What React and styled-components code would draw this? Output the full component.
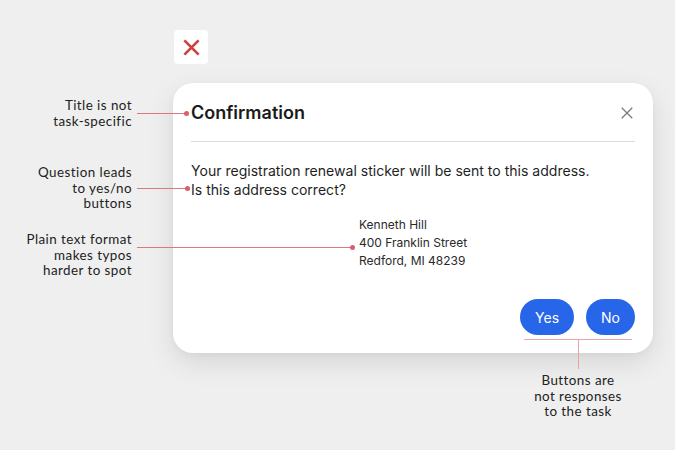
import React from 'react';
import styled, { createGlobalStyle } from 'styled-components';

const GlobalStyle = createGlobalStyle`
  html, body {
    margin: 0;
    padding: 0;
    background: #efefef;
  }
  body {
    font-family: 'Inter', 'Liberation Sans', sans-serif;
  }
`;

const Page = styled.div`
  position: relative;
  width: 675px;
  height: 450px;
  overflow: hidden;
  background: #efefef;
  padding: 30px 0 0 173px;
  box-sizing: border-box;
`;

const BadTile = styled.div`
  width: 34px;
  height: 34px;
  margin-left: 1px;
  background: #ffffff;
  border-radius: 4px;
  display: flex;
  align-items: center;
  justify-content: center;
`;

const Card = styled.div`
  margin-top: 19px;
  width: 480px;
  height: 270px;
  box-sizing: border-box;
  background: #ffffff;
  border-radius: 20px;
  box-shadow: 0 10px 28px rgba(0, 0, 0, 0.1), 0 2px 6px rgba(0, 0, 0, 0.04);
  padding: 19px 18px 18px 18px;
  display: flex;
  flex-direction: column;
`;

const Header = styled.div`
  display: flex;
  align-items: center;
  justify-content: space-between;
  padding-bottom: 17px;
  border-bottom: 1px solid #dcdcdc;
`;

const Title = styled.h2`
  margin: 0;
  font-size: 18px;
  line-height: 22px;
  font-weight: 600;
  color: #1a1a1a;
`;

const CloseButton = styled.button`
  border: none;
  background: none;
  padding: 0;
  margin-right: 1px;
  width: 14px;
  height: 14px;
  display: flex;
  cursor: pointer;
`;

const Question = styled.p`
  margin: 19px 0 0 0;
  font-size: 14.05px;
  line-height: 19px;
  color: #1f1f1f;
`;

const Address = styled.div`
  margin: 17px 0 0 168px;
  font-size: 12px;
  line-height: 18px;
  color: #2a2a2a;
`;

const Actions = styled.div`
  margin-top: auto;
  display: flex;
  justify-content: flex-end;
  gap: 12px;
`;

const PillButton = styled.button`
  height: 36px;
  padding: 0 15px;
  border: none;
  border-radius: 18px;
  background: #2766e8;
  color: #ffffff;
  font-family: 'Inter', 'Liberation Sans', sans-serif;
  font-size: 14px;
  cursor: pointer;
`;

const Note = styled.div`
  position: absolute;
  top: ${(p) => p.$top}px;
  right: ${(p) => p.$right}px;
  text-align: right;
  font-family: 'Lato', 'Liberation Sans', sans-serif;
  font-size: 13.4px;
  letter-spacing: 0.45px;
  line-height: 15.6px;
  color: #222222;
`;

const BottomNote = styled(Note)`
  right: auto;
  left: 513px;
  width: 130px;
  text-align: center;
`;

const Leader = styled.div`
  position: absolute;
  top: ${(p) => p.$top}px;
  left: 137px;
  width: ${(p) => p.$width}px;
  height: 1px;
  background: #d87a82;

  &::after {
    content: '';
    position: absolute;
    right: -3px;
    top: -2px;
    width: 5px;
    height: 5px;
    border-radius: 50%;
    background: #dc5f68;
  }
`;

const Bracket = styled.div`
  position: absolute;
  top: 339px;
  left: 524px;
  width: 108px;
  height: 1px;
  background: #f0a4ab;

  &::after {
    content: '';
    position: absolute;
    left: 54px;
    top: 0;
    width: 1px;
    height: 30px;
    background: #eba0a7;
  }
`;

const XMark = ({ size, color, width }) => (
  <svg width={size} height={size} viewBox="0 0 24 24" fill="none">
    <path d="M3 3 L21 21 M21 3 L3 21" stroke={color} strokeWidth={width} strokeLinecap="butt" />
  </svg>
);

export default function App() {
  return (
    <>
      <GlobalStyle />
      <Page>
        <BadTile>
          <XMark size={19} color="#c9443a" width={3.4} />
        </BadTile>
        <Card>
          <Header>
            <Title>Confirmation</Title>
            <CloseButton aria-label="Close">
              <XMark size={14} color="#7a7a7a" width={2.2} />
            </CloseButton>
          </Header>
          <Question>
            Your registration renewal sticker will be sent to this address.
            <br />
            Is this address correct?
          </Question>
          <Address>
            Kenneth Hill
            <br />
            400 Franklin Street
            <br />
            Redford, MI 48239
          </Address>
          <Actions>
            <PillButton>Yes</PillButton>
            <PillButton>No</PillButton>
          </Actions>
        </Card>

        <Note $top={98} $right={543}>
          Title is not
          <br />
          task-specific
        </Note>
        <Leader $top={113} $width={49} />

        <Note $top={165} $right={543}>
          Question leads
          <br />
          to yes/no
          <br />
          buttons
        </Note>
        <Leader $top={188} $width={50} />

        <Note $top={232} $right={543}>
          Plain text format
          <br />
          makes typos
          <br />
          harder to spot
        </Note>
        <Leader $top={247} $width={215} />

        <Bracket />
        <BottomNote $top={373}>
          Buttons are
          <br />
          not responses
          <br />
          to the task
        </BottomNote>
      </Page>
    </>
  );
}
